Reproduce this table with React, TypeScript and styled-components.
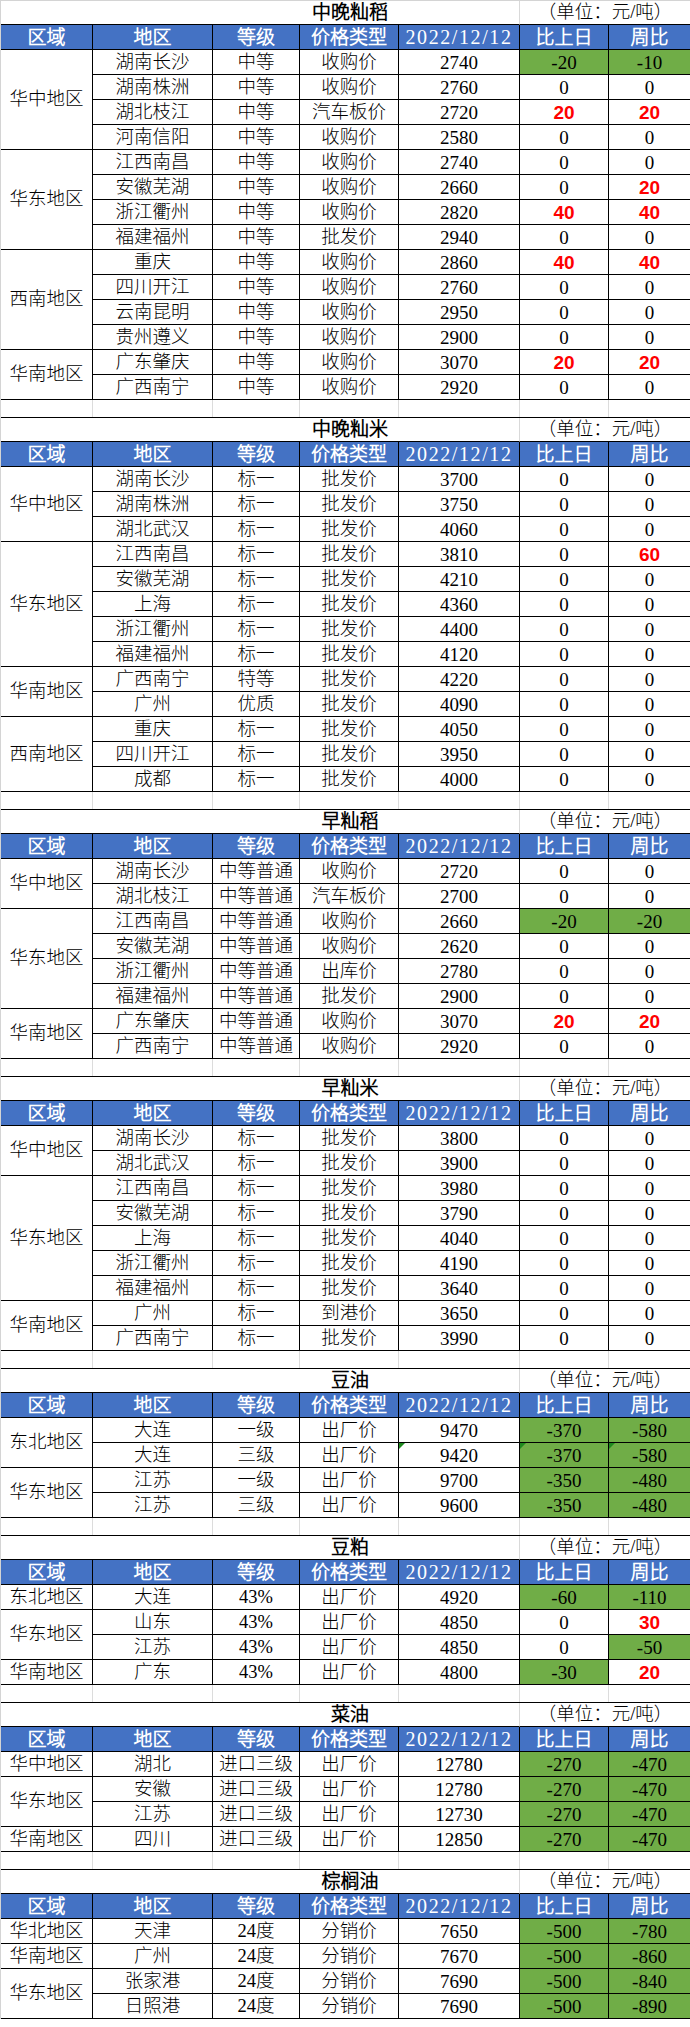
import styled, { createGlobalStyle } from 'styled-components';

const GlobalStyle = createGlobalStyle`
  html, body {
    margin: 0;
    padding: 0;
    background: #ffffff;
  }
`;

type Row = {
  area: string;
  grade: string;
  type: string;
  price: string;
  day: string;
  week: string;
  mark?: boolean;
};

type Group = { region: string; rows: Row[] };
type Section = { title: string; groups: Group[] };

const r = (
  area: string,
  grade: string,
  type: string,
  price: string,
  day: string,
  week: string,
  mark = false,
): Row => ({ area, grade, type, price, day, week, mark });

const sections: Section[] = [
  {
    title: '中晚籼稻',
    groups: [
      {
        region: '华中地区',
        rows: [
          r('湖南长沙', '中等', '收购价', '2740', '-20', '-10'),
          r('湖南株洲', '中等', '收购价', '2760', '0', '0'),
          r('湖北枝江', '中等', '汽车板价', '2720', '20', '20'),
          r('河南信阳', '中等', '收购价', '2580', '0', '0'),
        ],
      },
      {
        region: '华东地区',
        rows: [
          r('江西南昌', '中等', '收购价', '2740', '0', '0'),
          r('安徽芜湖', '中等', '收购价', '2660', '0', '20'),
          r('浙江衢州', '中等', '收购价', '2820', '40', '40'),
          r('福建福州', '中等', '批发价', '2940', '0', '0'),
        ],
      },
      {
        region: '西南地区',
        rows: [
          r('重庆', '中等', '收购价', '2860', '40', '40'),
          r('四川开江', '中等', '收购价', '2760', '0', '0'),
          r('云南昆明', '中等', '收购价', '2950', '0', '0'),
          r('贵州遵义', '中等', '收购价', '2900', '0', '0'),
        ],
      },
      {
        region: '华南地区',
        rows: [
          r('广东肇庆', '中等', '收购价', '3070', '20', '20'),
          r('广西南宁', '中等', '收购价', '2920', '0', '0'),
        ],
      },
    ],
  },
  {
    title: '中晚籼米',
    groups: [
      {
        region: '华中地区',
        rows: [
          r('湖南长沙', '标一', '批发价', '3700', '0', '0'),
          r('湖南株洲', '标一', '批发价', '3750', '0', '0'),
          r('湖北武汉', '标一', '批发价', '4060', '0', '0'),
        ],
      },
      {
        region: '华东地区',
        rows: [
          r('江西南昌', '标一', '批发价', '3810', '0', '60'),
          r('安徽芜湖', '标一', '批发价', '4210', '0', '0'),
          r('上海', '标一', '批发价', '4360', '0', '0'),
          r('浙江衢州', '标一', '批发价', '4400', '0', '0'),
          r('福建福州', '标一', '批发价', '4120', '0', '0'),
        ],
      },
      {
        region: '华南地区',
        rows: [
          r('广西南宁', '特等', '批发价', '4220', '0', '0'),
          r('广州', '优质', '批发价', '4090', '0', '0'),
        ],
      },
      {
        region: '西南地区',
        rows: [
          r('重庆', '标一', '批发价', '4050', '0', '0'),
          r('四川开江', '标一', '批发价', '3950', '0', '0'),
          r('成都', '标一', '批发价', '4000', '0', '0'),
        ],
      },
    ],
  },
  {
    title: '早籼稻',
    groups: [
      {
        region: '华中地区',
        rows: [
          r('湖南长沙', '中等普通', '收购价', '2720', '0', '0'),
          r('湖北枝江', '中等普通', '汽车板价', '2700', '0', '0'),
        ],
      },
      {
        region: '华东地区',
        rows: [
          r('江西南昌', '中等普通', '收购价', '2660', '-20', '-20'),
          r('安徽芜湖', '中等普通', '收购价', '2620', '0', '0'),
          r('浙江衢州', '中等普通', '出库价', '2780', '0', '0'),
          r('福建福州', '中等普通', '批发价', '2900', '0', '0'),
        ],
      },
      {
        region: '华南地区',
        rows: [
          r('广东肇庆', '中等普通', '收购价', '3070', '20', '20'),
          r('广西南宁', '中等普通', '收购价', '2920', '0', '0'),
        ],
      },
    ],
  },
  {
    title: '早籼米',
    groups: [
      {
        region: '华中地区',
        rows: [
          r('湖南长沙', '标一', '批发价', '3800', '0', '0'),
          r('湖北武汉', '标一', '批发价', '3900', '0', '0'),
        ],
      },
      {
        region: '华东地区',
        rows: [
          r('江西南昌', '标一', '批发价', '3980', '0', '0'),
          r('安徽芜湖', '标一', '批发价', '3790', '0', '0'),
          r('上海', '标一', '批发价', '4040', '0', '0'),
          r('浙江衢州', '标一', '批发价', '4190', '0', '0'),
          r('福建福州', '标一', '批发价', '3640', '0', '0'),
        ],
      },
      {
        region: '华南地区',
        rows: [
          r('广州', '标一', '到港价', '3650', '0', '0'),
          r('广西南宁', '标一', '批发价', '3990', '0', '0'),
        ],
      },
    ],
  },
  {
    title: '豆油',
    groups: [
      {
        region: '东北地区',
        rows: [
          r('大连', '一级', '出厂价', '9470', '-370', '-580'),
          r('大连', '三级', '出厂价', '9420', '-370', '-580', true),
        ],
      },
      {
        region: '华东地区',
        rows: [
          r('江苏', '一级', '出厂价', '9700', '-350', '-480'),
          r('江苏', '三级', '出厂价', '9600', '-350', '-480'),
        ],
      },
    ],
  },
  {
    title: '豆粕',
    groups: [
      { region: '东北地区', rows: [r('大连', '43%', '出厂价', '4920', '-60', '-110')] },
      {
        region: '华东地区',
        rows: [
          r('山东', '43%', '出厂价', '4850', '0', '30'),
          r('江苏', '43%', '出厂价', '4850', '0', '-50'),
        ],
      },
      { region: '华南地区', rows: [r('广东', '43%', '出厂价', '4800', '-30', '20')] },
    ],
  },
  {
    title: '菜油',
    groups: [
      { region: '华中地区', rows: [r('湖北', '进口三级', '出厂价', '12780', '-270', '-470')] },
      {
        region: '华东地区',
        rows: [
          r('安徽', '进口三级', '出厂价', '12780', '-270', '-470'),
          r('江苏', '进口三级', '出厂价', '12730', '-270', '-470'),
        ],
      },
      { region: '华南地区', rows: [r('四川', '进口三级', '出厂价', '12850', '-270', '-470')] },
    ],
  },
  {
    title: '棕榈油',
    groups: [
      { region: '华北地区', rows: [r('天津', '24度', '分销价', '7650', '-500', '-780')] },
      { region: '华南地区', rows: [r('广州', '24度', '分销价', '7670', '-500', '-860')] },
      {
        region: '华东地区',
        rows: [
          r('张家港', '24度', '分销价', '7690', '-500', '-840'),
          r('日照港', '24度', '分销价', '7690', '-500', '-890'),
        ],
      },
    ],
  },
];

const headers = ['区域', '地区', '等级', '价格类型', '2022/12/12', '比上日', '周比'];

const COLS = '92px 120px 87px 99px 121px 89px 81px';
const FONT = `"Liberation Serif", "Noto Sans CJK SC Light", "Noto Sans CJK SC", serif`;

const Sheet = styled.div`
  width: 690px;
  box-sizing: border-box;
  border-left: 1px solid #d4d4d4;
  font-family: ${FONT};
  color: #000;
`;

const Block = styled.div<{ $first: boolean }>`
  display: grid;
  grid-template-columns: ${COLS};
  grid-template-rows: 24px;
  grid-auto-rows: 25px;
  border-top: 1px solid ${({ $first }) => ($first ? '#d4d4d4' : '#000')};
`;

const Cell = styled.div<{ $last?: boolean }>`
  position: relative;
  box-sizing: border-box;
  display: flex;
  align-items: center;
  justify-content: center;
  border-bottom: 1px solid #000;
  border-right: ${({ $last }) => ($last ? 'none' : '1px solid #000')};
  font-size: 18.5px;
  font-weight: 300;
  line-height: 1;
  white-space: nowrap;
  overflow: hidden;
`;

const TitleCell = styled(Cell)`
  grid-column: span 5;
  border-right: 1px solid #d9d9d9;
  padding-left: 180px;
  font-weight: bold;
  font-size: 19px;
`;

const UnitCell = styled(Cell)`
  grid-column: span 2;
  font-size: 18.5px;
`;

const HeadCell = styled(Cell)<{ $date?: boolean }>`
  background: #4472c4;
  color: #fff;
  font-size: ${({ $date }) => ($date ? '20px' : '19px')};
  font-weight: ${({ $date }) => ($date ? 'normal' : 'bold')};
  letter-spacing: ${({ $date }) => ($date ? '1.6px' : '0')};
`;

const RegionCell = styled(Cell)<{ $span: number }>`
  grid-column: 1;
  grid-row: span ${({ $span }) => $span};
`;

const NumCell = styled(Cell)`
  font-size: 19px;
`;

const ChangeCell = styled(Cell)<{ $tone: 'up' | 'down' | 'flat' }>`
  background: ${({ $tone }) => ($tone === 'down' ? '#70ad47' : 'transparent')};
  color: ${({ $tone }) => ($tone === 'up' ? '#ff0000' : '#000')};
  font-family: ${({ $tone }) => ($tone === 'up' ? `"Liberation Sans", Arial, sans-serif` : FONT)};
  font-weight: ${({ $tone }) => ($tone === 'up' ? 'bold' : '300')};
  font-size: 19px;
`;

const Flag = styled.span`
  position: absolute;
  left: 0;
  top: 0;
  width: 0;
  height: 0;
  border-top: 6px solid #1f8a1f;
  border-right: 6px solid transparent;
`;

const Gap = styled.div`
  display: grid;
  grid-template-columns: ${COLS};
  height: 17px;
`;

const GapCell = styled.div<{ $last?: boolean }>`
  border-right: ${({ $last }) => ($last ? 'none' : '1px solid #dcdcdc')};
`;

function tone(v: string): 'up' | 'down' | 'flat' {
  if (v.startsWith('-')) return 'down';
  if (v === '0') return 'flat';
  return 'up';
}

function SectionBlock({ section, first }: { section: Section; first: boolean }) {
  return (
    <Block $first={first}>
      <TitleCell>{section.title}</TitleCell>
      <UnitCell $last>（单位：元/吨）</UnitCell>
      {headers.map((h, i) => (
        <HeadCell key={h} $date={i === 4} $last={i === 6}>
          {h}
        </HeadCell>
      ))}
      {section.groups.map((g, gi) =>
        g.rows.map((row, ri) => (
          <Rows key={`${gi}-${ri}`} row={row} region={ri === 0 ? g : null} />
        )),
      )}
    </Block>
  );
}

function Rows({ row, region }: { row: Row; region: Group | null }) {
  return (
    <>
      {region && <RegionCell $span={region.rows.length}>{region.region}</RegionCell>}
      <Cell>{row.area}</Cell>
      <Cell>{row.grade}</Cell>
      <Cell>{row.type}</Cell>
      <NumCell>
        {row.mark && <Flag />}
        {row.price}
      </NumCell>
      <ChangeCell $tone={tone(row.day)}>
        {row.mark && <Flag />}
        {row.day}
      </ChangeCell>
      <ChangeCell $tone={tone(row.week)} $last>
        {row.mark && <Flag />}
        {row.week}
      </ChangeCell>
    </>
  );
}

export default function App() {
  return (
    <>
      <GlobalStyle />
      <Sheet>
        {sections.map((s, i) => (
          <div key={s.title}>
            {i > 0 && (
              <Gap>
                {headers.map((h, j) => (
                  <GapCell key={h} $last={j === 6} />
                ))}
              </Gap>
            )}
            <SectionBlock section={s} first={i === 0} />
          </div>
        ))}
      </Sheet>
    </>
  );
}
